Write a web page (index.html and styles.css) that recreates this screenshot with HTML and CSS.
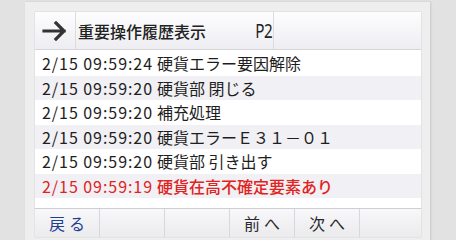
FILE: index.html
```html
<!DOCTYPE html>
<html lang="ja">
<head>
    <meta charset="UTF-8">
    <meta name="viewport" content="width=device-width, initial-scale=1.0">
    <title>重要操作履歴表示</title>
    <link rel="stylesheet" href="styles.css">
</head>
<body>
    <div class="frame">
        <div class="panel">
            <!-- ヘッダー -->
            <div class="header">
                <div class="back-cell">
                    <svg width="26" height="20" viewBox="0 0 26 20">
                        <path d="M2 10 H22 M14 2 L22 10 L14 18" fill="none" stroke="#333" stroke-width="3.2" stroke-linecap="square"/>
                    </svg>
                </div>
                <div class="title-cell">
                    <span class="title">重要操作履歴表示</span>
                    <span class="page">P2</span>
                </div>
                <div class="blank-cell"></div>
            </div>

            <!-- 履歴一覧 -->
            <div class="history">
                <div class="row"><span class="time">2/15 09:59:24</span>硬貨エラー要因解除</div>
                <div class="row shaded"><span class="time">2/15 09:59:20</span>硬貨部 閉じる</div>
                <div class="row"><span class="time">2/15 09:59:20</span>補充処理</div>
                <div class="row shaded"><span class="time">2/15 09:59:20</span>硬貨エラーＥ３１－０１</div>
                <div class="row"><span class="time">2/15 09:59:20</span>硬貨部 引き出す</div>
                <div class="row shaded alert"><span class="time">2/15 09:59:19</span>硬貨在高不確定要素あり</div>
            </div>

            <!-- フッター -->
            <div class="footer">
                <div class="foot-btn back">戻る</div>
                <div class="foot-btn"></div>
                <div class="foot-btn"></div>
                <div class="foot-btn">前へ</div>
                <div class="foot-btn">次へ</div>
                <div class="foot-btn last"></div>
            </div>
        </div>
    </div>
</body>
</html>
```

FILE: styles.css
```css
body {
    margin: 0;
    width: 456px;
    height: 240px;
    overflow: hidden;
    background: #e2e2e2;
    font-family: "Noto Sans CJK JP", "Noto Sans", sans-serif;
}
.frame {
    margin: 2px 0 0 25px;
    width: 405px;
    height: 250px;
    box-sizing: border-box;
    padding: 10px 9px 0 10px;
    background: #eeeeee;
    box-shadow: 1px 0 2px rgba(0,0,0,0.12);
}
.panel {
    width: 386px;
    height: 225px;
    background: #ffffff;
    display: flex;
    flex-direction: column;
    box-shadow: 0 0 1px rgba(0,0,0,0.25);
}
.header {
    display: flex;
    height: 38px;
    background: linear-gradient(#fdfdff, #eeeef2);
    border-bottom: 1px solid #d6d6da;
    box-sizing: border-box;
}
.back-cell {
    width: 40px;
    display: flex;
    align-items: center;
    justify-content: center;
    border-right: 1px solid #dcdce0;
}
.title-cell {
    width: 198px;
    display: flex;
    align-items: center;
    justify-content: space-between;
    padding: 0 1px 0 2px;
    border-right: 1px solid #dcdce0;
    box-sizing: border-box;
    color: #222;
}
.title {
    font-size: 16px;
    font-weight: 500;
}
.page {
    font-size: 19px;
    font-family: "Noto Sans", sans-serif;
    letter-spacing: -0.5px;
    transform: scaleX(0.8);
    transform-origin: right center;
}
.blank-cell {
    flex: 1;
}
.history {
    flex: 1;
    padding-top: 1px;
}
.row {
    height: 24.5px;
    line-height: 24.5px;
    padding-left: 7px;
    font-size: 16px;
    color: #1e1e1e;
    white-space: pre;
}
.time {
    display: inline-block;
    width: 115px;
    letter-spacing: 0.95px;
    font-variant-numeric: tabular-nums;
    font-weight: 400;
}
.row.shaded {
    background: #f1f0f4;
}
.row.alert {
    color: #e0231c;
    font-weight: 500;
}
.footer {
    display: flex;
    height: 29px;
    border-top: 1px solid #cfcfd3;
    background: linear-gradient(#f8f8fa, #ebebee);
    box-sizing: border-box;
}
.foot-btn {
    width: 65px;
    display: flex;
    align-items: center;
    justify-content: center;
    font-size: 16px;
    color: #2a2a2a;
    border-right: 1px solid #d8d8dc;
    letter-spacing: 4px;
    padding-left: 4px;
    box-sizing: border-box;
}
.foot-btn.back {
    color: #1d3f8e;
}
.foot-btn.last {
    flex: 1;
    border-right: none;
}
```
